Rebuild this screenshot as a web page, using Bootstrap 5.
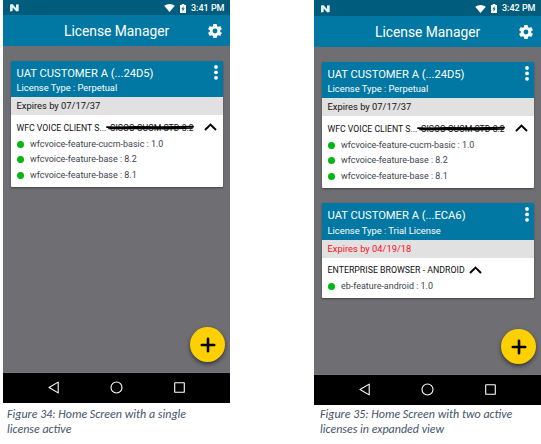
<!DOCTYPE html>
<html lang="en">
<head>
<meta charset="utf-8">
<meta name="viewport" content="width=device-width, initial-scale=1">
<title>License Manager</title>
<link href="https://cdn.jsdelivr.net/npm/bootstrap@5.3.0/dist/css/bootstrap.min.css" rel="stylesheet">
<style>
body{font-family:Roboto,sans-serif;line-height:1;background:#fff;overflow:hidden;width:541px;height:444px}
figure{width:227px}
.pages{padding-left:3px;gap:84px}
.phone{height:403px;background:#6f6e73;white-space:nowrap}
.phone.tall{height:405px}
.statusbar{height:15px;background:#005c7d;color:#fff;padding:1px 5.5px 0 7px;font-size:9px;font-weight:500}
.tall .statusbar{height:16px}
.battery{margin:0 5px}
.appbar{height:30.5px;background:#0078a3;color:#fff;font-size:13.8px}
.appbar .title{padding:3px 0 0 61px}
.appbar svg{margin:1px 8px 0 0}
.licenses{padding:15px 7.5px 0;gap:15.5px}
.license{border:0;border-radius:1px;box-shadow:0 1px 2px #0006;background:#fff}
.license-head{height:36.5px;background:#0078a3;color:#fff;padding:6px 0 0 6px}
.license-name{font-size:11.2px;line-height:14px}
.license-type{font-size:9.35px;line-height:14px;margin-top:.5px}
.dots{top:4.3px;right:5px}
.expiry{height:18px;background:#e1e1e1;color:#111;padding-left:6px;font-size:9.35px}
.expiry.soon{color:#f8101c}
.products{padding:4px 6px 0;height:71.5px}
.products.short{height:40px}
.product{height:17.3px;font-size:8.7px;color:#111}
.product>span{padding-top:.6px}
.product>svg{margin-bottom:1px}
.short .product{font-size:8.8px}
.feature{height:15.7px;font-size:8.95px;color:#3d444b}
.feature i{width:7px;height:7px;background:#00b712;margin-right:6.5px}
.strike{margin-left:3.5px}
.strike svg{left:-4px;top:1.6px}
.fab{width:35px;height:35px;background:#ffd000;margin:0 5px 10px auto;box-shadow:0 2px 4px #0008}
.navbtns{height:31px;background:#000;border-top:1px solid #77767b}
figcaption{font:italic 12px/15px Carlito,"Open Sans",sans-serif;color:#44546a;white-space:nowrap}
.cap1{padding:4px 0 0 4px}.cap2{padding:2px 0 0 6px}
</style>
</head>
<body>
<svg class="d-none">
<symbol id="n" viewBox="0 0 9 8"><path d="M0 .5 2.4 0 6 4V.6L8.7.2V7L6.3 7.6 2.7 3.6V7L0 7.6Z" fill="#e5f1f5"/></symbol>
<symbol id="wifi" viewBox="0 0 12 9"><path d="M0 2Q6-2 12 2L6 9Z" fill="#fff"/></symbol>
<symbol id="bat" viewBox="0 0 6 9"><path d="M0 1H1.7V0H4.3V1H6V9H0Z" fill="#fff"/><path d="M3.6 2 1.5 5.2H2.8L2.4 7.8 4.6 4.4H3.3Z" fill="#005c7d"/></symbol>
<symbol id="gear" viewBox="2 2 20 20"><path fill="#fff" d="M19.43 12.98c.04-.32.07-.64.07-.98s-.03-.66-.07-.98l2.11-1.65c.19-.15.24-.42.12-.64l-2-3.46c-.12-.22-.39-.3-.61-.22l-2.49 1c-.52-.4-1.08-.73-1.69-.98l-.38-2.65A.49.49 0 0 0 14 2h-4c-.25 0-.46.18-.49.42l-.38 2.65c-.61.25-1.17.59-1.69.98l-2.49-1c-.23-.09-.49 0-.61.22l-2 3.46c-.13.22-.07.49.12.64l2.11 1.65c-.04.32-.07.65-.07.98s.03.66.07.98l-2.11 1.65c-.19.15-.24.42-.12.64l2 3.46c.12.22.39.3.61.22l2.49-1c.52.4 1.08.73 1.69.98l.38 2.65c.03.24.24.42.49.42h4c.25 0 .46-.18.49-.42l.38-2.65c.61-.25 1.17-.59 1.69-.98l2.49 1c.23.09.49 0 .61-.22l2-3.46c.12-.22.07-.49-.12-.64zM12 15.5a3.5 3.5 0 1 1 0-7 3.5 3.5 0 0 1 0 7z"/></symbol>
<symbol id="dots" viewBox="0 0 4 15"><g fill="#fff"><circle cx="2" cy="2" r="1.9"/><circle cx="2" cy="7.4" r="1.9"/><circle cx="2" cy="12.8" r="1.9"/></g></symbol>
<symbol id="up" viewBox="0 0 13 8"><path d="M1 7 6.5 1.5 12 7" fill="none" stroke="#000" stroke-width="1.9"/></symbol>
<symbol id="scribble" viewBox="0 0 89 6"><path d="M1 2.1 12 2.5 30 2 55 2.3 87 1.8M3 3.4 35 3 60 3.5 86 2.9" fill="none" stroke="#000" stroke-width="1.9" stroke-linecap="round"/></symbol>
<symbol id="plus" viewBox="0 0 16 16"><path d="M8 1.8V14.2M1.8 8H14.2" stroke="#000" stroke-width="2.6" stroke-linecap="round"/></symbol>
<symbol id="nav" viewBox="0 0 227 30"><g fill="none" stroke="#fff" stroke-width="1.1"><path d="M55.2 9.1V19.9L46 14.5Z" stroke-linejoin="round"/><circle cx="113.5" cy="14.5" r="5.5"/><rect x="171.7" y="9.7" width="9.6" height="9.6" rx=".4"/></g></symbol>
</svg>
<main class="pages d-flex align-items-start">
<figure class="m-0 flex-shrink-0">
<div class="phone d-flex flex-column">
<div class="statusbar d-flex align-items-center"><svg width="9" height="8"><use href="#n"/></svg><svg class="ms-auto" width="11" height="8"><use href="#wifi"/></svg><svg class="battery" width="6" height="9"><use href="#bat"/></svg><span class="clock">3:41 PM</span></div>
<header class="appbar d-flex align-items-center"><span class="title">License Manager</span><svg class="ms-auto" width="14" height="14"><use href="#gear"/></svg></header>
<div class="licenses d-flex flex-column">
<section class="license">
<div class="license-head position-relative"><div class="license-name">UAT CUSTOMER A (...24D5)</div><div class="license-type">License Type : Perpetual</div><svg class="dots position-absolute" width="4" height="15"><use href="#dots"/></svg></div>
<div class="expiry d-flex align-items-center">Expires by 07/17/37</div>
<div class="products"><div class="product d-flex align-items-center"><span>WFC VOICE CLIENT S...</span><span class="strike position-relative">CISCO CUCM STD 8.2<svg class="position-absolute" width="89" height="6"><use href="#scribble"/></svg></span><svg class="ms-auto" width="13" height="8"><use href="#up"/></svg></div>
<div class="feature d-flex align-items-center"><i class="rounded-circle"></i><span>wfcvoice-feature-cucm-basic : 1.0</span></div><div class="feature d-flex align-items-center"><i class="rounded-circle"></i><span>wfcvoice-feature-base : 8.2</span></div><div class="feature d-flex align-items-center"><i class="rounded-circle"></i><span>wfcvoice-feature-base : 8.1</span></div></div>
</section>
</div>
<div class="fab rounded-circle d-flex align-items-center justify-content-center mt-auto"><svg width="16" height="16"><use href="#plus"/></svg></div>
<div class="navbtns"><svg class="d-block" width="227" height="30"><use href="#nav"/></svg></div>
</div>
<figcaption class="cap1"><span>Figure 34: Home Screen with a single</span><br><span>license active</span></figcaption>
</figure>
<figure class="m-0 flex-shrink-0">
<div class="phone tall d-flex flex-column">
<div class="statusbar d-flex align-items-center"><svg width="9" height="8"><use href="#n"/></svg><svg class="ms-auto" width="11" height="8"><use href="#wifi"/></svg><svg class="battery" width="6" height="9"><use href="#bat"/></svg><span class="clock">3:42 PM</span></div>
<header class="appbar d-flex align-items-center"><span class="title">License Manager</span><svg class="ms-auto" width="14" height="14"><use href="#gear"/></svg></header>
<div class="licenses d-flex flex-column">
<section class="license">
<div class="license-head position-relative"><div class="license-name">UAT CUSTOMER A (...24D5)</div><div class="license-type">License Type : Perpetual</div><svg class="dots position-absolute" width="4" height="15"><use href="#dots"/></svg></div>
<div class="expiry d-flex align-items-center">Expires by 07/17/37</div>
<div class="products"><div class="product d-flex align-items-center"><span>WFC VOICE CLIENT S...</span><span class="strike position-relative">CISCO CUCM STD 8.2<svg class="position-absolute" width="89" height="6"><use href="#scribble"/></svg></span><svg class="ms-auto" width="13" height="8"><use href="#up"/></svg></div>
<div class="feature d-flex align-items-center"><i class="rounded-circle"></i><span>wfcvoice-feature-cucm-basic : 1.0</span></div><div class="feature d-flex align-items-center"><i class="rounded-circle"></i><span>wfcvoice-feature-base : 8.2</span></div><div class="feature d-flex align-items-center"><i class="rounded-circle"></i><span>wfcvoice-feature-base : 8.1</span></div></div>
</section>
<section class="license">
<div class="license-head position-relative"><div class="license-name">UAT CUSTOMER A (...ECA6)</div><div class="license-type">License Type : Trial License</div><svg class="dots position-absolute" width="4" height="15"><use href="#dots"/></svg></div>
<div class="expiry soon d-flex align-items-center">Expires by 04/19/18</div>
<div class="products short"><div class="product d-flex align-items-center"><span>ENTERPRISE BROWSER - ANDROID</span><svg class="ms-1" width="13" height="8"><use href="#up"/></svg></div>
<div class="feature d-flex align-items-center"><i class="rounded-circle"></i><span>eb-feature-android : 1.0</span></div></div>
</section>
</div>
<div class="fab rounded-circle d-flex align-items-center justify-content-center mt-auto"><svg width="16" height="16"><use href="#plus"/></svg></div>
<div class="navbtns"><svg class="d-block" width="227" height="30"><use href="#nav"/></svg></div>
</div>
<figcaption class="cap2"><span>Figure 35: Home Screen with two active</span><br><span>licenses in expanded view</span></figcaption>
</figure>
</main>
<script src="https://cdn.jsdelivr.net/npm/bootstrap@5.3.0/dist/js/bootstrap.bundle.min.js"></script>
</body>
</html>
